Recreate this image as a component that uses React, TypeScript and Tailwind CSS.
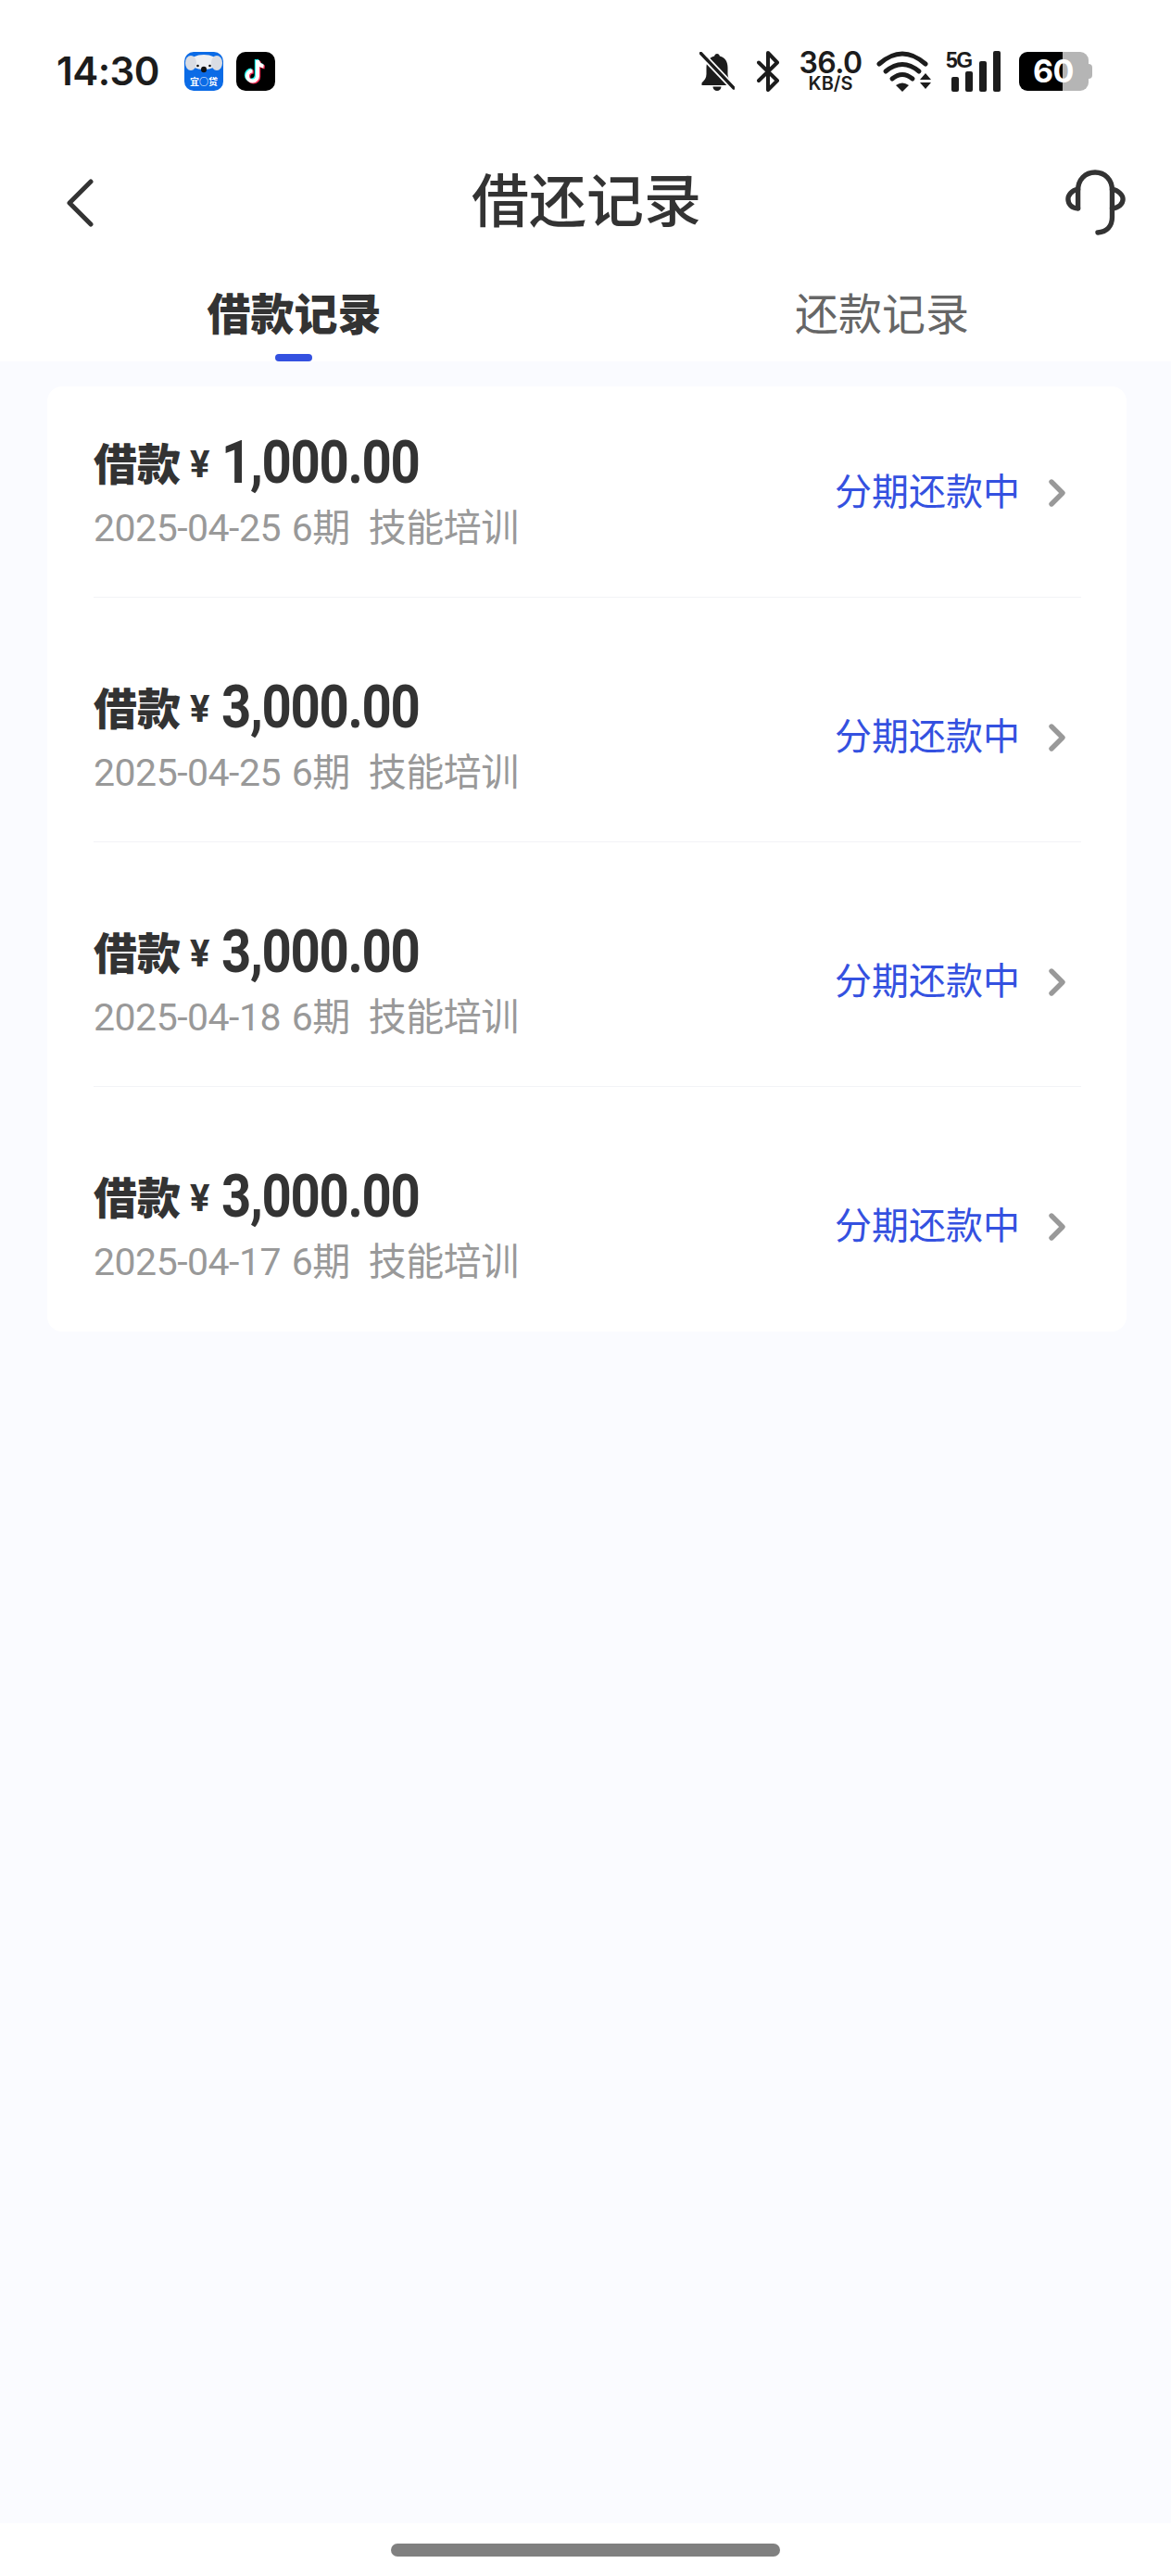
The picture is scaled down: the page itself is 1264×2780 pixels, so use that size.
import { ChevronRight } from 'lucide-react';

const CJK = "font-['Roboto','Noto_Sans_CJK_SC',sans-serif]";

const RECORDS = [
  { amount: '1,000.00', date: '2025-04-25' },
  { amount: '3,000.00', date: '2025-04-25' },
  { amount: '3,000.00', date: '2025-04-18' },
  { amount: '3,000.00', date: '2025-04-17' },
];

function KoalaIcon() {
  return (
    <div className="relative w-[42px] h-[42px] rounded-[10px] bg-[#0b6be6] overflow-hidden">
      <svg viewBox="0 0 42 42" className="absolute inset-0 w-full h-full">
        <ellipse cx="21" cy="11" rx="15" ry="8" fill="#eceef2" />
        <ellipse cx="7" cy="12" rx="6" ry="8" fill="#d9dce3" />
        <ellipse cx="35" cy="12" rx="6" ry="8" fill="#d9dce3" />
        <ellipse cx="21" cy="19" rx="3" ry="3.200" fill="#111" />
        <circle cx="14.500" cy="15" r="1.300" fill="#111" />
        <circle cx="27.500" cy="15" r="1.300" fill="#111" />
      </svg>
      <span className="absolute left-0 right-0 bottom-[4px] text-center text-[10px] leading-[12px] font-bold text-white font-['Noto_Sans_CJK_SC',sans-serif]">
        宜○贷
      </span>
    </div>
  );
}

function TikTokIcon() {
  const d = 'M23 9v17a5.500 5.500 0 1 1-5.500-5.500M23 9c.6 3.600 3 6 6.500 6.400';
  return (
    <div className="w-[42px] h-[42px] rounded-[10px] bg-black">
      <svg viewBox="0 0 42 42" className="w-full h-full" fill="none" strokeWidth="4">
        <path d={d} stroke="#25f4ee" transform="translate(-1.200 -1)" />
        <path d={d} stroke="#fe2c55" transform="translate(1.200 1)" />
        <path d={d} stroke="#fff" />
      </svg>
    </div>
  );
}

function StatusBar() {
  return (
    <div className="h-[150px] pt-[4px] pl-[61px] pr-[84px] flex items-center justify-between">
      <div className="flex items-center">
        <span className="text-[42px] leading-none font-semibold text-[#1c1c1c] font-['Inter',sans-serif] w-[138px] tracking-[-0.5px]">14:30</span>
        <div className="flex gap-[14px]">
          <KoalaIcon />
          <TikTokIcon />
        </div>
      </div>
      <div className="flex items-center text-[#1c1c1c]">
        {/* muted bell */}
        <svg viewBox="0 0 38 42" className="w-[38px] h-[42px] mr-[24px]">
          <path d="M19 2c1.600 0 2.600 1 2.800 2.500C28 6 30.500 11 30.500 17v7c0 4 2 6.500 5 9.500V36h-33v-2.500c3-3 5-5.500 5-9.500v-7c0-6 2.500-11 8.700-12.500C16.400 3 17.400 2 19 2z" fill="#1c1c1c" />
          <path d="M14.500 37.500h9a4.500 4.500 0 0 1-9 0z" fill="#1c1c1c" />
          <path d="M0 0l38 40" stroke="#fff" strokeWidth="7" />
          <path d="M1.500 1.500L37 39" stroke="#1c1c1c" strokeWidth="3.400" strokeLinecap="round" />
        </svg>
        {/* bluetooth */}
        <svg viewBox="0 0 25 44" className="w-[25px] h-[44px] mr-[20px]" fill="none" stroke="#1c1c1c" strokeWidth="4" strokeLinejoin="round" strokeLinecap="round">
          <path d="M2 12.500l20 19.500-10 10V2l10 10.500L2 32" />
        </svg>
        {/* net speed */}
        <div className="flex flex-col items-center w-[69px] mr-[15px] font-['Inter',sans-serif] font-semibold text-[#1c1c1c]">
          <span className="text-[32px] leading-[27px] tracking-[-0.5px]">36.0</span>
          <span className="text-[20px] leading-[19px]">KB/S</span>
        </div>
        {/* wifi */}
        <svg viewBox="0 0 59 44" className="w-[59px] h-[44px] mr-[16px]" fill="none" stroke="#1c1c1c" strokeWidth="5" strokeLinecap="round">
          <path d="M3 14Q28-8 53 14" />
          <path d="M10 22Q28 7 46 22" />
          <path d="M17 30Q28 21 39 30" />
          <path d="M21 37Q28 32 35 37L28 44z" fill="#1c1c1c" stroke="none" />
          <path d="M47 31l6-7 6 7zM47 34h12l-6 7z" fill="#1c1c1c" stroke="none" />
        </svg>
        {/* 5G signal */}
        <div className="relative w-[59px] h-[44px] mr-[20px] flex items-end justify-end gap-[6.500px]">
          <span className="absolute left-0 top-[-3px] text-[23px] leading-[26px] font-bold font-['Liberation_Sans',sans-serif] tracking-[-1.500px]">5G</span>
          <div className="w-[8.500px] h-[16px] rounded-[2px] bg-[#1c1c1c]" />
          <div className="w-[8.500px] h-[22px] rounded-[2px] bg-[#1c1c1c]" />
          <div className="w-[8.500px] h-[33px] rounded-[2px] bg-[#1c1c1c]" />
          <div className="w-[8.500px] h-[44px] rounded-[2px] bg-[#1c1c1c]" />
        </div>
        {/* battery */}
        <div className="relative w-[80px] h-[42px] flex">
          <div className="w-[47px] h-full bg-black rounded-l-[9px]" />
          <div className="w-[28px] h-full bg-[#b5b5b5] rounded-r-[9px]" />
          <div className="w-[4px] h-[16px] self-center bg-[#b5b5b5] rounded-r-[4px]" />
          <span className="absolute left-[15px] top-0 text-[34px] leading-[42px] font-bold text-white font-['Inter',sans-serif] tracking-[-0.5px]">60</span>
        </div>
      </div>
    </div>
  );
}

function NavBar() {
  return (
    <div className="h-[136px] pt-[2px] flex items-center pl-[71px] pr-[48px]">
      <div className="w-[300px]">
        <svg viewBox="0 0 30 52" className="w-[30px] h-[52px]" fill="none" stroke="#333" strokeWidth="5" strokeLinecap="round" strokeLinejoin="round">
          <path d="M27 3L4 26l23 23" />
        </svg>
      </div>
      <h1 className={`flex-1 pr-[21px] text-center text-[62px] leading-none font-medium text-[#333] ${CJK}`}>借还记录</h1>
      <div className="w-[300px] flex justify-end">
        <svg viewBox="0 0 68 76" className="w-[66px] h-[74px]" fill="none" stroke="#333" strokeWidth="5.500" strokeLinecap="round">
          <path d="M14 44V24C14 12 22 4 33 4s19 8 19 20v30c0 10-6 16-16 17" />
          <path d="M14 23C7 24 3 29 3 34s4 10 11 10" />
          <path d="M52 23c7 1 12 6 12 11s-5 10-12 10" />
        </svg>
      </div>
    </div>
  );
}

function Tabs() {
  return (
    <div className={`h-[104px] flex ${CJK}`}>
      <div className="relative w-[632px] flex justify-center pt-[21px] pl-[3px]">
        <span className="text-[47px] leading-[66px] font-black text-[#333]">借款记录</span>
        <div className="absolute bottom-0 left-[297px] w-[40px] h-[8px] rounded-full bg-[#3451e0]" />
      </div>
      <div className="w-[632px] flex justify-center pt-[21px] pl-[8px]">
        <span className="text-[47px] leading-[66px] text-[#666]">还款记录</span>
      </div>
    </div>
  );
}

function RecordRow({ amount, date, first, last }: { amount: string; date: string; first: boolean; last: boolean }) {
  return (
    <div className={`${first ? 'pt-[48px] h-[228px]' : 'pt-[84px] h-[264px]'} ${last ? '' : 'border-b border-[#f2f3f6]'} flex items-start justify-between`}>
      <div>
        <div className="h-[70px] flex items-center text-[#333] font-bold">
          <span className={`text-[47px] leading-none pt-[3px] font-black ${CJK}`}>借款</span>
          <span className="text-[40px] leading-none ml-[10px] pt-[3px] font-['Roboto',sans-serif]">¥</span>
          <span className="inline-block origin-left scale-x-[0.88] text-[64px] leading-none ml-[13px] tracking-[-1.500px] font-['Roboto',sans-serif]">{amount}</span>
        </div>
        <div className={`mt-[7px] text-[41px] leading-[56px] tracking-[-0.5px] text-[#999] whitespace-nowrap ${CJK}`}>
          {date} <span className="ml-[2px]">6期</span><span className="ml-[20px]">技能培训</span>
        </div>
      </div>
      <div className={`flex items-center h-[64px] mt-[35px] ${CJK}`}>
        <span className="text-[40px] leading-none text-[#3451e0]">分期还款中</span>
        <ChevronRight className="w-[48px] h-[48px] ml-[16px] mr-[2px] text-[#999]" strokeWidth={2.700} />
      </div>
    </div>
  );
}

export default function App() {
  return (
    <div className="w-[1264px] h-[2780px] bg-white flex flex-col overflow-hidden">
      <StatusBar />
      <NavBar />
      <Tabs />
      <div className="h-[2333px] bg-[#fafbff] pl-[51px] pr-[48px] pt-[27px]">
        <div className="bg-white rounded-[16px] pl-[50px] pr-[49px]">
          {RECORDS.map((r, i) => (
            <RecordRow key={i} amount={r.amount} date={r.date} first={i === 0} last={i === RECORDS.length - 1} />
          ))}
        </div>
      </div>
      <div className="flex-1 flex items-center justify-center">
        <div className="w-[420px] h-[14px] rounded-full bg-[#808080]" />
      </div>
    </div>
  );
}
